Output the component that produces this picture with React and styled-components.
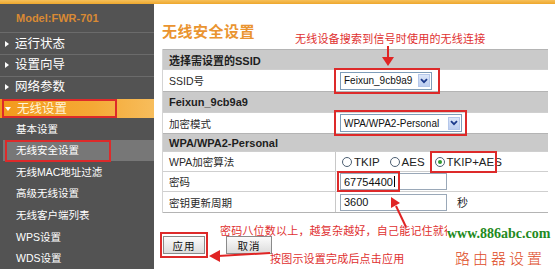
import React from "react";
import styled, { createGlobalStyle, css } from "styled-components";

const GlobalStyle = createGlobalStyle`
  html, body { margin: 0; padding: 0; background: #fff; }
  body { font-family: "Liberation Sans", "Noto Sans CJK SC", sans-serif; }
`;

const RED = "#dd2a2a";
const CJK = `"Liberation Sans", "Noto Sans CJK SC", sans-serif`;

const markBox = css`
  &::after {
    content: "";
    position: absolute;
    pointer-events: none;
    border: 2px solid ${RED};
    box-sizing: border-box;
    left: ${(p) => p.$l ?? 0}px;
    top: ${(p) => p.$t ?? 0}px;
    width: ${(p) => p.$w}px;
    height: ${(p) => p.$h}px;
  }
`;

const Page = styled.div`
  position: relative;
  width: 555px;
  height: 269px;
  overflow: hidden;
  background: #fff;
  display: flex;
  flex-direction: column;
`;

const TopBar = styled.div`
  height: 4px;
  flex: none;
  background: linear-gradient(#f6c05a, #eea72c);
`;

const Main = styled.div`
  flex: 1;
  display: flex;
  min-height: 0;
`;

const Sidebar = styled.nav`
  width: 154px;
  flex: none;
  background: #535353;
  display: flex;
  flex-direction: column;
  font-family: ${CJK};
`;

const ModelRow = styled.div`
  height: 29px;
  padding-left: 16px;
  display: flex;
  align-items: center;
  color: #d98a34;
  font-size: 11px;
  font-weight: 700;
  box-sizing: border-box;
`;

const Marked = styled.span`
  position: relative;
  display: inline-flex;
  ${markBox}
`;

const NavItem = styled.div`
  position: relative;
  height: 22px;
  box-sizing: border-box;
  border-top: 1px solid #6b6b6b;
  display: flex;
  align-items: center;
  padding-left: 5px;
  gap: 6px;
  color: #fff;
  font-size: 12.5px;
  line-height: 14px;
  ${(p) =>
    p.$active &&
    css`
      border-top: 2px solid #535353;
      height: 21px;
      background: linear-gradient(90deg, #f39a1c 0%, #f5a935 60%, #f7bd5c 100%);
      color: #fff3d8;
      ${markBox}
    `}
`;

const Tri = styled.span`
  width: 0;
  height: 0;
  ${(p) =>
    p.$down
      ? css`
          border-left: 3px solid transparent;
          border-right: 3px solid transparent;
          border-top: 4px solid #fff;
        `
      : css`
          border-top: 3px solid transparent;
          border-bottom: 3px solid transparent;
          border-left: 4px solid #fff;
        `}
`;

const SubItem = styled.div`
  position: relative;
  height: 22px;
  display: flex;
  align-items: center;
  padding-left: 16px;
  color: #fff;
  font-size: 10.5px;
  line-height: 12px;
  ${(p) =>
    p.$selected &&
    css`
      margin-left: 3px;
      padding-left: 13px;
      background: #777;
      ${markBox}
    `}
`;

const Content = styled.div`
  flex: 1;
  padding: 0 7px 0 8px;
  display: flex;
  flex-direction: column;
  font-family: ${CJK};
`;

const Title = styled.h1`
  margin: 0;
  height: 45px;
  box-sizing: border-box;
  padding-top: 18px;
  font-size: 15px;
  line-height: 18px;
  font-weight: 700;
  letter-spacing: 0.5px;
  color: #ea9430;
  font-family: "Noto Sans CJK SC", sans-serif;
`;

const Table = styled.div`
  display: flex;
  flex-direction: column;
  border-left: 1px solid #d4d4d4;
`;

const HeaderRow = styled.div`
  height: ${(p) => p.$h}px;
  box-sizing: border-box;
  background: #cacaca;
  border-top: 1px solid #b4b4b4;
  display: flex;
  align-items: center;
  padding-left: 6px;
  font-size: 11px;
  font-weight: 700;
  color: #1e1e1e;
`;

const FieldRow = styled.div`
  height: ${(p) => p.$h}px;
  box-sizing: border-box;
  display: grid;
  grid-template-columns: 173px 1fr;
  border-top: 1px solid #cfcfcf;
  ${(p) => p.$last && css`border-bottom: 1px solid #b4b4b4;`}
`;

const Label = styled.div`
  display: flex;
  align-items: center;
  padding-left: 6px;
  font-size: 10.5px;
  color: #2a2a2a;
  border-right: 1px solid #c8c8c8;
`;

const Value = styled.div`
  display: flex;
  align-items: center;
  padding-left: 4px;
  gap: 6px;
  font-size: 11px;
  color: #222;
`;

const Select = styled.div`
  width: ${(p) => p.$w}px;
  height: 18px;
  box-sizing: border-box;
  border: 1px solid #7f9db9;
  background: #fff;
  display: flex;
  align-items: center;
  padding: 0 1px 0 3px;
  gap: 3px;
  font-size: 10px;
  color: #111;
`;

const SelectText = styled.span`
  flex: 1;
  white-space: nowrap;
`;

const DropBtn = styled.span`
  flex: none;
  width: 12px;
  height: 13px;
  background: linear-gradient(#dbe6f8, #bccdf0);
  border: 1px solid #b5c7ea;
  box-sizing: border-box;
  display: flex;
  align-items: center;
  justify-content: center;
`;

const Radios = styled.div`
  display: flex;
  align-items: center;
  gap: 10px;
  padding-left: 2px;
`;

const RadioOpt = styled.label`
  display: flex;
  align-items: center;
  gap: 2px;
  font-size: 11.5px;
  color: #222;
`;

const RadioDot = styled.span`
  width: 10px;
  height: 10px;
  box-sizing: border-box;
  border-radius: 50%;
  border: 1px solid #4d5f73;
  background: #fff;
  display: flex;
  align-items: center;
  justify-content: center;
  ${(p) =>
    p.$on &&
    css`
      &::before {
        content: "";
        width: 4px;
        height: 4px;
        border-radius: 50%;
        background: #2f9a2f;
      }
    `}
`;

const Input = styled.div`
  width: 107px;
  height: 17px;
  box-sizing: border-box;
  border: 1px solid #9aa8b8;
  display: flex;
  align-items: center;
  padding-left: 3px;
  font-size: 11px;
  color: #111;
`;

const Caret = styled.span`
  width: 1px;
  height: 11px;
  background: #000;
  margin-left: 1px;
`;

const Unit = styled.span`
  margin-left: 4px;
  font-size: 11px;
  color: #222;
`;

const Buttons = styled.div`
  display: flex;
  gap: 21px;
  margin-top: 23px;
  padding-left: 1px;
`;

const Button = styled.button`
  width: ${(p) => p.$w}px;
  height: 18px;
  padding: 0;
  border: 1px solid #8a8a8a;
  background: linear-gradient(#fbfbfb, #dcdcdc);
  font-family: ${CJK};
  font-size: 10.5px;
  color: #111;
  letter-spacing: 1px;
`;

const Note = styled.div`
  position: absolute;
  left: ${(p) => p.$x}px;
  top: ${(p) => p.$y}px;
  color: #e03030;
  font-family: "Noto Sans CJK SC", sans-serif;
  font-size: 11px;
  line-height: 14px;
  letter-spacing: 0.2px;
  white-space: nowrap;
`;

const Arrows = styled.svg`
  position: absolute;
  left: 0;
  top: 0;
  pointer-events: none;
`;

const Watermark = styled.div`
  position: absolute;
  left: 447px;
  top: 222px;
  width: 108px;
  height: 47px;
  background: #fff;
  display: flex;
  flex-direction: column;
  align-items: flex-start;
`;

const Site = styled.div`
  font-family: "Liberation Serif", serif;
  font-weight: 700;
  font-size: 14px;
  line-height: 18px;
  color: #1f8a22;
  margin-top: 3px;
`;

const Brand = styled.div`
  font-family: "Noto Sans CJK SC", sans-serif;
  font-weight: 300;
  font-size: 15px;
  line-height: 18px;
  letter-spacing: 3px;
  color: #de4a1e;
  margin: 6px 0 0 8px;
`;

const Chevron = () => (
  <svg width="8" height="6" viewBox="0 0 8 6">
    <path d="M1 1.2 L4 4.2 L7 1.2" fill="none" stroke="#1c3a8c" strokeWidth="1.8" />
  </svg>
);

const navTop = ["运行状态", "设置向导", "网络参数"];
const subs = ["基本设置", "无线安全设置", "无线MAC地址过滤", "高级无线设置", "无线客户端列表", "WPS设置", "WDS设置"];

export default function App() {
  return (
    <Page>
      <GlobalStyle />
      <TopBar />
      <Main>
        <Sidebar>
          <ModelRow>Model:FWR-701</ModelRow>
          {navTop.map((t) => (
            <NavItem key={t}>
              <Tri />
              <span>{t}</span>
            </NavItem>
          ))}
          <NavItem $active $l={2} $t={0} $w={115} $h={19}>
            <Tri $down />
            <span>无线设置</span>
          </NavItem>
          {subs.map((t, i) =>
            i === 1 ? (
              <SubItem key={t} $selected $l={2} $t={0} $w={106} $h={22}>
                {t}
              </SubItem>
            ) : (
              <SubItem key={t}>{t}</SubItem>
            )
          )}
        </Sidebar>
        <Content>
          <Title>无线安全设置</Title>
          <Table>
            <HeaderRow $h={20}>选择需设置的SSID</HeaderRow>
            <FieldRow $h={22}>
              <Label>SSID号</Label>
              <Value>
                <Marked $l={-6} $t={-4} $w={106} $h={26}>
                  <Select $w={92}>
                    <SelectText>Feixun_9cb9a9</SelectText>
                    <DropBtn><Chevron /></DropBtn>
                  </Select>
                </Marked>
              </Value>
            </FieldRow>
            <HeaderRow $h={21}>Feixun_9cb9a9</HeaderRow>
            <FieldRow $h={21}>
              <Label>加密模式</Label>
              <Value>
                <Marked $l={-6} $t={-4} $w={133} $h={26}>
                  <Select $w={122}>
                    <SelectText>WPA/WPA2-Personal</SelectText>
                    <DropBtn><Chevron /></DropBtn>
                  </Select>
                </Marked>
              </Value>
            </FieldRow>
            <HeaderRow $h={18}>WPA/WPA2-Personal</HeaderRow>
            <FieldRow $h={20}>
              <Label>WPA加密算法</Label>
              <Value>
                <Radios>
                  <RadioOpt><RadioDot />TKIP</RadioOpt>
                  <RadioOpt><RadioDot />AES</RadioOpt>
                  <Marked $l={-5} $t={-5} $w={67} $h={22}>
                    <RadioOpt><RadioDot $on />TKIP+AES</RadioOpt>
                  </Marked>
                </Radios>
              </Value>
            </FieldRow>
            <FieldRow $h={20}>
              <Label>密码</Label>
              <Value>
                <Marked $l={-3} $t={-2} $w={63} $h={21}>
                  <Input>67754400<Caret /></Input>
                </Marked>
              </Value>
            </FieldRow>
            <FieldRow $h={22} $last>
              <Label>密钥更新周期</Label>
              <Value>
                <Input>3600</Input>
                <Unit>秒</Unit>
              </Value>
            </FieldRow>
          </Table>
          <Buttons>
            <Marked $l={-3} $t={-4} $w={48} $h={26}>
              <Button $w={42}>应用</Button>
            </Marked>
            <Button $w={46}>取消</Button>
          </Buttons>
        </Content>
      </Main>

      <Note $x={295} $y={31}>无线设备搜索到信号时使用的无线连接</Note>
      <Note $x={220} $y={223}>密码八位数以上，越复杂越好，自己能记住就行</Note>
      <Note $x={270} $y={251}>按图示设置完成后点击应用</Note>

      <Arrows width="555" height="269" viewBox="0 0 555 269">
        <g stroke="#e02424" strokeWidth="2" fill="#e02424">
          <line x1="388" y1="46" x2="388" y2="58" />
          <polygon points="382,57 394,57 388,66" stroke="none" />
          <line x1="406" y1="227" x2="396" y2="206" />
          <polygon points="391,197 400,203 391,208" stroke="none" />
          <line x1="270" y1="253" x2="218" y2="256" />
          <polygon points="209,256 220,250 220,262" stroke="none" />
        </g>
      </Arrows>

      <Watermark>
        <Site>www.886abc.com</Site>
        <Brand>路由器设置</Brand>
      </Watermark>
    </Page>
  );
}
